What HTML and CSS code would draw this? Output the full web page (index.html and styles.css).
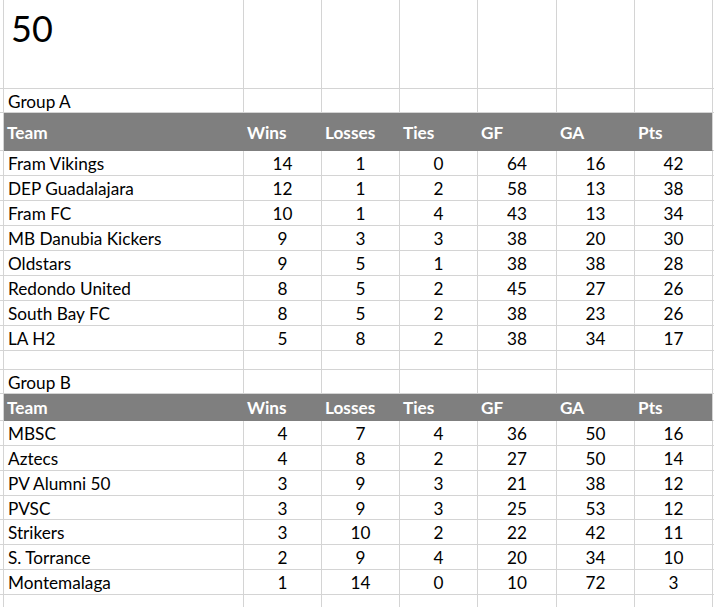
FILE: index.html
```html
<!DOCTYPE html>
<html>
<head>
<meta charset="utf-8">
<link rel="stylesheet" href="styles.css">
</head>
<body>
<div class="sheet">
  <div class="row r-title"><div class="c"></div><div class="c title">50</div><div class="c"></div><div class="c"></div><div class="c"></div><div class="c"></div><div class="c"></div><div class="c"></div><div class="c end"></div></div>
  <div class="row r-group"><div class="c"></div><div class="c name">Group A</div><div class="c"></div><div class="c"></div><div class="c"></div><div class="c"></div><div class="c"></div><div class="c"></div><div class="c end"></div></div>
  <div class="row r-headA head"><div class="c"></div><div class="c h">Team</div><div class="c h">Wins</div><div class="c h">Losses</div><div class="c h">Ties</div><div class="c h">GF</div><div class="c h">GA</div><div class="c h last">Pts</div><div class="c end"></div></div>
  <div class="row r-data"><div class="c"></div><div class="c name">Fram Vikings</div><div class="c n">14</div><div class="c n">1</div><div class="c n">0</div><div class="c n">64</div><div class="c n">16</div><div class="c n">42</div><div class="c end"></div></div>
  <div class="row r-data"><div class="c"></div><div class="c name">DEP Guadalajara</div><div class="c n">12</div><div class="c n">1</div><div class="c n">2</div><div class="c n">58</div><div class="c n">13</div><div class="c n">38</div><div class="c end"></div></div>
  <div class="row r-data"><div class="c"></div><div class="c name">Fram FC</div><div class="c n">10</div><div class="c n">1</div><div class="c n">4</div><div class="c n">43</div><div class="c n">13</div><div class="c n">34</div><div class="c end"></div></div>
  <div class="row r-data"><div class="c"></div><div class="c name">MB Danubia Kickers</div><div class="c n">9</div><div class="c n">3</div><div class="c n">3</div><div class="c n">38</div><div class="c n">20</div><div class="c n">30</div><div class="c end"></div></div>
  <div class="row r-data"><div class="c"></div><div class="c name">Oldstars</div><div class="c n">9</div><div class="c n">5</div><div class="c n">1</div><div class="c n">38</div><div class="c n">38</div><div class="c n">28</div><div class="c end"></div></div>
  <div class="row r-data"><div class="c"></div><div class="c name">Redondo United</div><div class="c n">8</div><div class="c n">5</div><div class="c n">2</div><div class="c n">45</div><div class="c n">27</div><div class="c n">26</div><div class="c end"></div></div>
  <div class="row r-data"><div class="c"></div><div class="c name">South Bay FC</div><div class="c n">8</div><div class="c n">5</div><div class="c n">2</div><div class="c n">38</div><div class="c n">23</div><div class="c n">26</div><div class="c end"></div></div>
  <div class="row r-data"><div class="c"></div><div class="c name">LA H2</div><div class="c n">5</div><div class="c n">8</div><div class="c n">2</div><div class="c n">38</div><div class="c n">34</div><div class="c n">17</div><div class="c end"></div></div>
  <div class="row r-empty"><div class="c"></div><div class="c"></div><div class="c"></div><div class="c"></div><div class="c"></div><div class="c"></div><div class="c"></div><div class="c"></div><div class="c end"></div></div>
  <div class="row r-groupB"><div class="c"></div><div class="c name">Group B</div><div class="c"></div><div class="c"></div><div class="c"></div><div class="c"></div><div class="c"></div><div class="c"></div><div class="c end"></div></div>
  <div class="row r-headB head"><div class="c"></div><div class="c h">Team</div><div class="c h">Wins</div><div class="c h">Losses</div><div class="c h">Ties</div><div class="c h">GF</div><div class="c h">GA</div><div class="c h last">Pts</div><div class="c end"></div></div>
  <div class="row r-data"><div class="c"></div><div class="c name">MBSC</div><div class="c n">4</div><div class="c n">7</div><div class="c n">4</div><div class="c n">36</div><div class="c n">50</div><div class="c n">16</div><div class="c end"></div></div>
  <div class="row r-data"><div class="c"></div><div class="c name">Aztecs</div><div class="c n">4</div><div class="c n">8</div><div class="c n">2</div><div class="c n">27</div><div class="c n">50</div><div class="c n">14</div><div class="c end"></div></div>
  <div class="row r-data"><div class="c"></div><div class="c name">PV Alumni 50</div><div class="c n">3</div><div class="c n">9</div><div class="c n">3</div><div class="c n">21</div><div class="c n">38</div><div class="c n">12</div><div class="c end"></div></div>
  <div class="row r-data r-short"><div class="c"></div><div class="c name">PVSC</div><div class="c n">3</div><div class="c n">9</div><div class="c n">3</div><div class="c n">25</div><div class="c n">53</div><div class="c n">12</div><div class="c end"></div></div>
  <div class="row r-data"><div class="c"></div><div class="c name">Strikers</div><div class="c n">3</div><div class="c n">10</div><div class="c n">2</div><div class="c n">22</div><div class="c n">42</div><div class="c n">11</div><div class="c end"></div></div>
  <div class="row r-data"><div class="c"></div><div class="c name">S. Torrance</div><div class="c n">2</div><div class="c n">9</div><div class="c n">4</div><div class="c n">20</div><div class="c n">34</div><div class="c n">10</div><div class="c end"></div></div>
  <div class="row r-data"><div class="c"></div><div class="c name">Montemalaga</div><div class="c n">1</div><div class="c n">14</div><div class="c n">0</div><div class="c n">10</div><div class="c n">72</div><div class="c n">3</div><div class="c end"></div></div>
  <div class="row r-tail"><div class="c"></div><div class="c"></div><div class="c"></div><div class="c"></div><div class="c"></div><div class="c"></div><div class="c"></div><div class="c"></div><div class="c end"></div></div>
</div>
</body>
</html>
```

FILE: styles.css
```css
html, body {
  margin: 0;
  padding: 0;
  background: #ffffff;
}

body {
  font-family: "Lato", "Liberation Sans", sans-serif;
  font-size: 17.2px;
  color: #000000;
  width: 714px;
  height: 607px;
  overflow: hidden;
}

.sheet {
  display: flex;
  flex-direction: column;
}

.row {
  display: grid;
  grid-template-columns: 4px 240px 78px 78px 78px 79px 78px 78px 1fr;
}

.c {
  box-sizing: border-box;
  border-right: 1px solid #d4d4d4;
  border-bottom: 1px solid #d4d4d4;
  display: flex;
  align-items: center;
  padding: 0 4px;
  line-height: 20px;
  white-space: nowrap;
  overflow: hidden;
}

.c.end {
  border-right: none;
  padding: 0;
}

.row > .c:first-child {
  padding: 0;
}

.r-title { height: 89px; }
.r-group { height: 24px; }
.r-headA { height: 38px; }
.r-data { height: 25px; }
.r-short { height: 24px; }
.r-empty { height: 19px; }
.r-groupB { height: 24px; }
.r-headB { height: 27px; }
.r-tail { height: 13px; }

.r-group .c,
.r-groupB .c {
  padding-top: 3px;
}

.r-data .c {
  padding-top: 2px;
}

.title {
  align-items: flex-start;
  font-size: 36px;
  line-height: 43px;
  padding-top: 7px;
  padding-left: 7px;
}

.name {
  justify-content: flex-start;
}

.n {
  justify-content: center;
}

.head .h {
  background: #7f7f7f;
  border-right-color: #7f7f7f;
  border-bottom-color: #7f7f7f;
  color: #ffffff;
  font-weight: 700;
  font-size: 17.2px;
  padding-left: 3px;
  padding-top: 2px;
}

.r-headA .h {
  padding-top: 3px;
}

.head .h.last {
  border-right-color: #d4d4d4;
}
```
